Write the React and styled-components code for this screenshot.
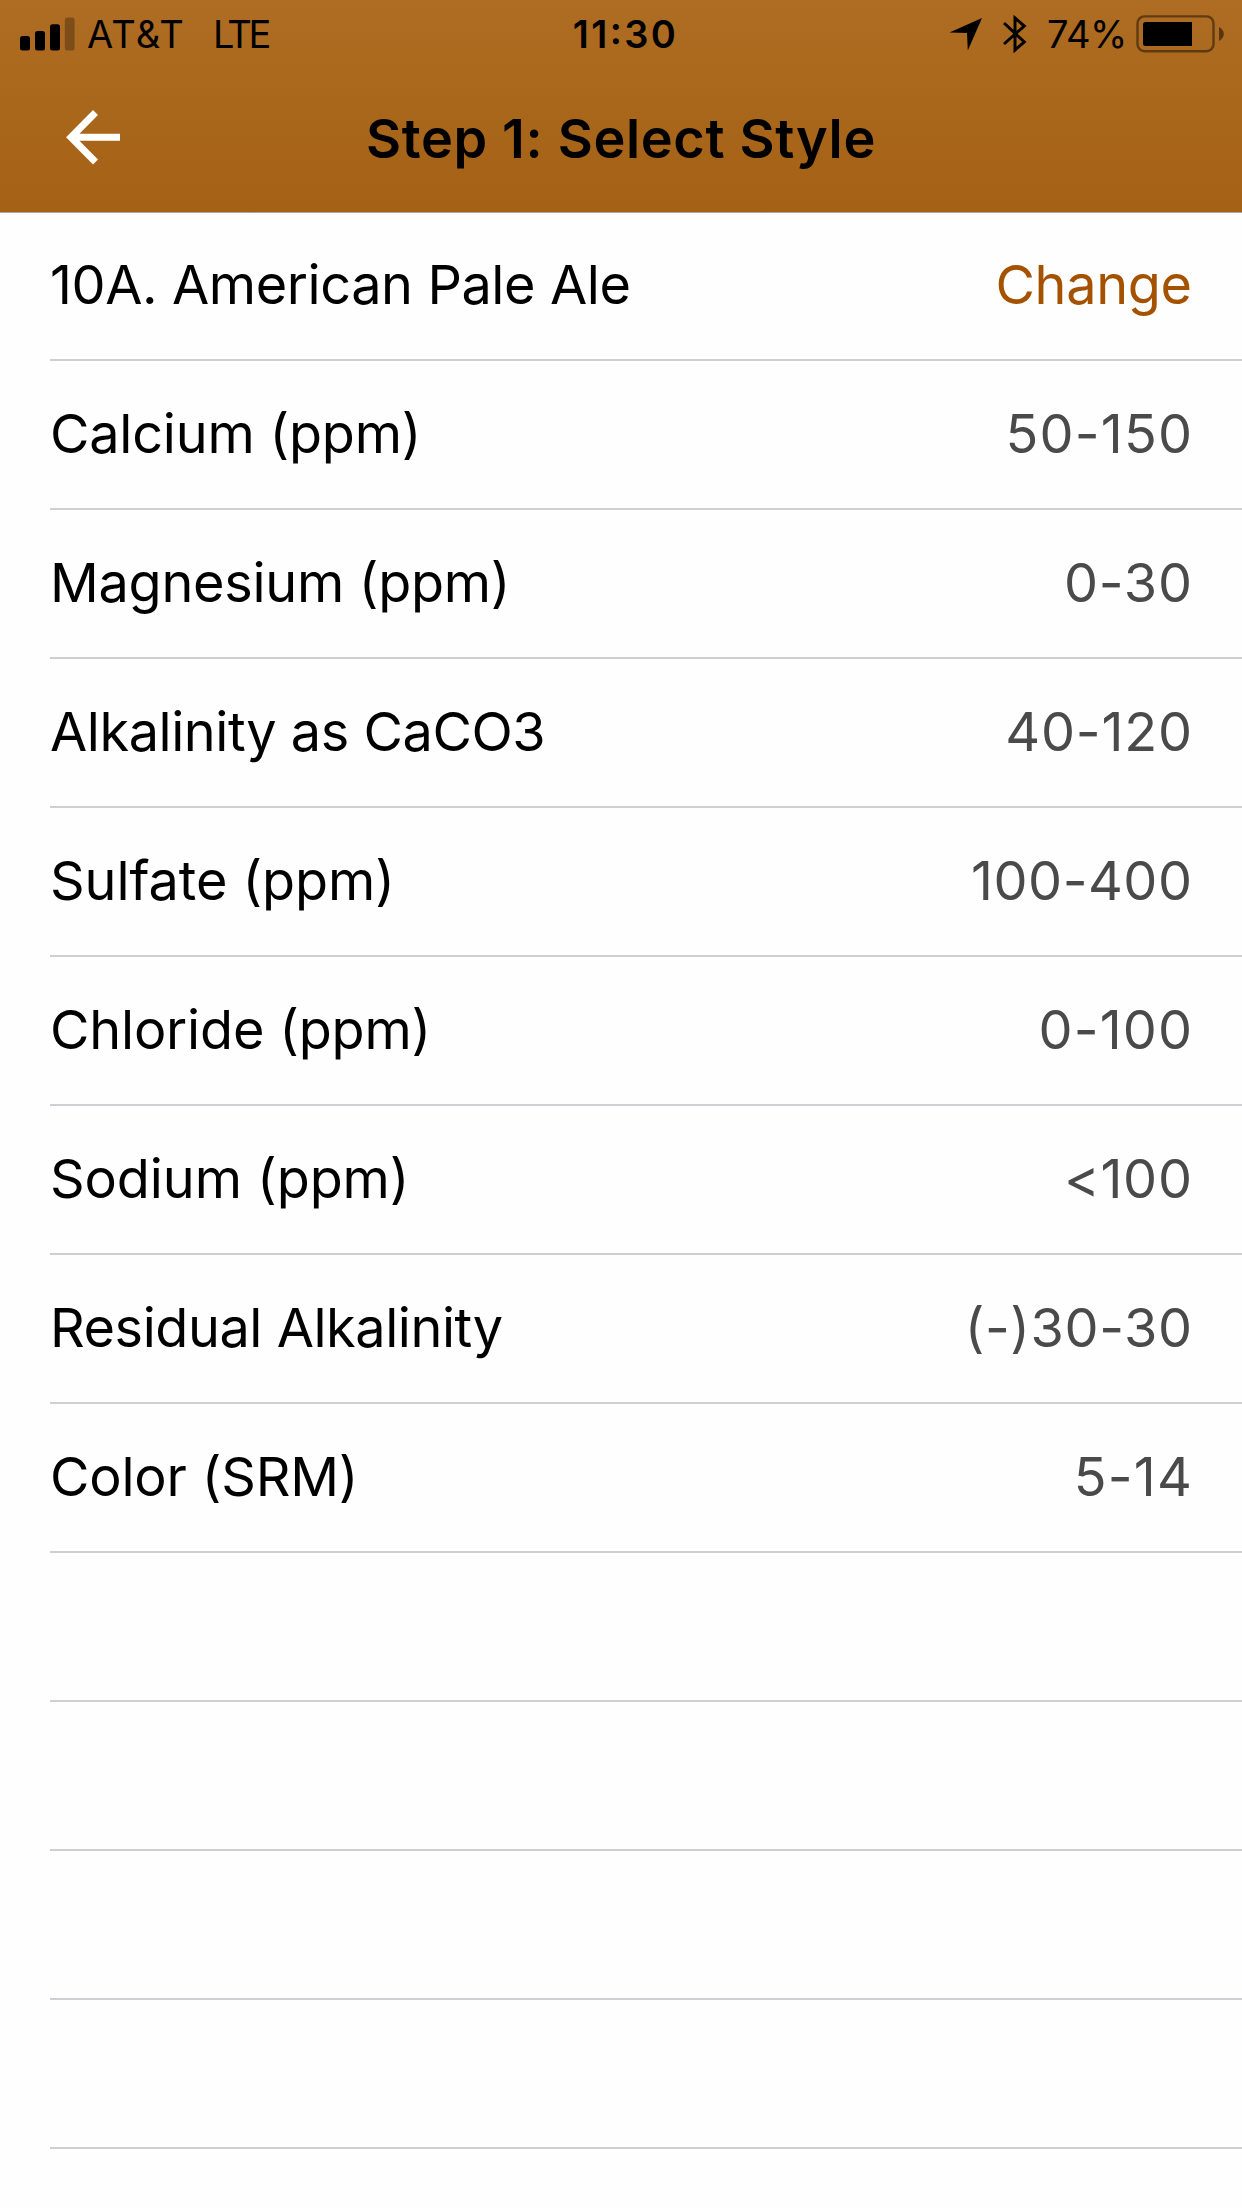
import React from "react";
import styled, { createGlobalStyle } from "styled-components";

const rows = [
  { label: "10A. American Pale Ale", track: -0.41, value: "Change", valueTrack: -0.34, action: true },
  { label: "Calcium (ppm)", track: -0.21, value: "50-150", valueTrack: 1.2 },
  { label: "Magnesium (ppm)", track: -0.28, value: "0-30", valueTrack: 0.8 },
  { label: "Alkalinity as CaCO3", track: -0.44, value: "40-120", valueTrack: 0.8 },
  { label: "Sulfate (ppm)", track: -0.06, value: "100-400", valueTrack: 0.5 },
  { label: "Chloride (ppm)", track: -0.18, value: "0-100", valueTrack: 1.1 },
  { label: "Sodium (ppm)", track: -0.08, value: "<100", valueTrack: 0.75 },
  { label: "Residual Alkalinity", track: -0.44, value: "(-)30-30", valueTrack: 0.58 },
  { label: "Color (SRM)", track: -0.18, value: "5-14", valueTrack: 1.26 },
];

//empty table cells under the data
const emptyRows = [1, 2, 3, 4];

function SignalIcon() {
  return (
    <svg width="55" height="34" viewBox="0 0 55 34">
      <rect x="0" y="19" width="10" height="14.5" rx="2.5" />
      <rect x="15" y="14" width="10" height="19.5" rx="2.5" />
      <rect x="30" y="7.3" width="10" height="26.2" rx="2.5" />
      <rect x="44.8" y="0.5" width="9.8" height="33" rx="2.5" opacity="0.28" />
    </svg>
  );
}

function LocationIcon() {
  return (
    <svg width="34" height="34" viewBox="0 0 34 34">
      <path d="M0.5 15.5L33 1L18.8 33.5L18 16Z" />
    </svg>
  );
}

function BluetoothIcon() {
  return (
    <svg width="24" height="40" viewBox="0 0 24 40" fill="none" stroke="#000" strokeWidth="3">
      <path d="M1 9L21.3 28L12 36V4L21.3 12L1 30" />
    </svg>
  );
}

function BatteryIcon() {
  return (
    <svg width="88" height="38" viewBox="0 0 88 38">
      <rect x="1.5" y="1.4" width="76" height="34.8" rx="7" fill="none" stroke="#000" strokeWidth="2.4" opacity="0.45" />
      <path d="M9.5 7H56V31H9.5Q7 31 7 28.5V9.5Q7 7 9.5 7Z" />
      <path d="M83 12Q87.8 15 87.8 19Q87.8 23 83 26Z" opacity="0.5" />
    </svg>
  );
}

function BackIcon() {
  return (
    <svg width="56" height="56" viewBox="0 0 56 56" fill="none" stroke="#fff" strokeWidth="7">
      <path d="M29.5 3.5L5 28.3L29.5 53M6 28.3H54" />
    </svg>
  );
}

export default function App() {
  return (
    <Screen>
      <GlobalStyle />
      <Header>
        <StatusBar>
          <StatusLeft>
            <SignalIcon />
            <Carrier>AT&amp;T</Carrier>
            <Network>LTE</Network>
          </StatusLeft>
          <Clock>11:30</Clock>
          <StatusRight>
            <LocationIcon />
            <BluetoothIcon />
            <Percent>74%</Percent>
            <BatteryIcon />
          </StatusRight>
        </StatusBar>
        <NavBar>
          <BackButton aria-label="Back">
            <BackIcon />
          </BackButton>
          <Title>Step 1: Select Style</Title>
        </NavBar>
      </Header>
      <List>
        {rows.map((row) => (
          <Row key={row.label}>
            <Label $track={row.track}>{row.label}</Label>
            <Value $track={row.valueTrack} $action={row.action}>
              {row.value}
            </Value>
          </Row>
        ))}
        {emptyRows.map((n) => (
          <Row key={n} />
        ))}
      </List>
    </Screen>
  );
}

const GlobalStyle = createGlobalStyle`
  * {
    box-sizing: border-box;
  }
  body {
    margin: 0;
    background: #fefefe;
  }
`;

const Screen = styled.div`
  width: 1242px;
  height: 2208px;
  overflow: hidden;
  background: #fefefe;
  color: #000;
  font-family: Inter, "Liberation Sans", sans-serif;
  font-feature-settings: "calt" 0;
  white-space: nowrap;
  svg {
    display: block;
    flex-shrink: 0;
  }
`;

const Header = styled.header`
  height: 213px;
  background: linear-gradient(#af6d24, #a9671b 50%, #a56217);
  border-bottom: 1px solid #a9a6a4;
`;

const StatusBar = styled.div`
  height: 67px;
  display: grid;
  grid-template-columns: 1fr auto 1fr;
  align-items: center;
  padding: 0 18px 0 20px;
  font-size: 38px;
  line-height: 67px;
`;

const StatusLeft = styled.div`
  display: flex;
  align-items: center;
`;

const Carrier = styled.span`
  margin-left: 12px;
  padding-top: 1px;
  letter-spacing: 1.2px;
`;

const Network = styled.span`
  margin-left: 28px;
  padding-top: 1px;
  letter-spacing: -3.4px;
`;

const Clock = styled.span`
  padding: 1px 0 0 7px;
  font-weight: 600;
  font-feature-settings: "calt" 1;
  letter-spacing: 2.39px;
`;

const StatusRight = styled.div`
  display: flex;
  align-items: center;
  justify-content: flex-end;
  gap: 20px;
`;

const Percent = styled.span`
  margin-right: -11px;
  padding-top: 1px;
  letter-spacing: -0.4px;
`;

const NavBar = styled.div`
  height: 144px;
  display: grid;
  grid-template-columns: 200px 1fr 200px;
  align-items: center;
`;

const BackButton = styled.button`
  width: 56px;
  height: 56px;
  margin: 0 0 5px 66px;
  padding: 0;
  border: 0;
  background: none;
`;

const Title = styled.h1`
  margin: 0;
  font-size: 54px;
  font-weight: 600;
  line-height: 144px;
  letter-spacing: 0.64px;
  text-align: center;
`;

const List = styled.div`
  display: flex;
  flex-direction: column;
  margin-top: -1px;
  padding-left: 50px;
`;

const Row = styled.div`
  height: 149px;
  display: flex;
  justify-content: space-between;
  padding-right: 50px;
  border-bottom: 2px solid #cfced3;
  font-size: 54px;
  line-height: 145px;
`;

const Label = styled.span`
  letter-spacing: ${(props) => props.$track}px;
`;

const Value = styled.span`
  color: ${(props) => (props.$action ? "#a55200" : "#4a4a4a")};
  letter-spacing: ${(props) => props.$track}px;
  margin-right: ${(props) => -props.$track}px;
`;
